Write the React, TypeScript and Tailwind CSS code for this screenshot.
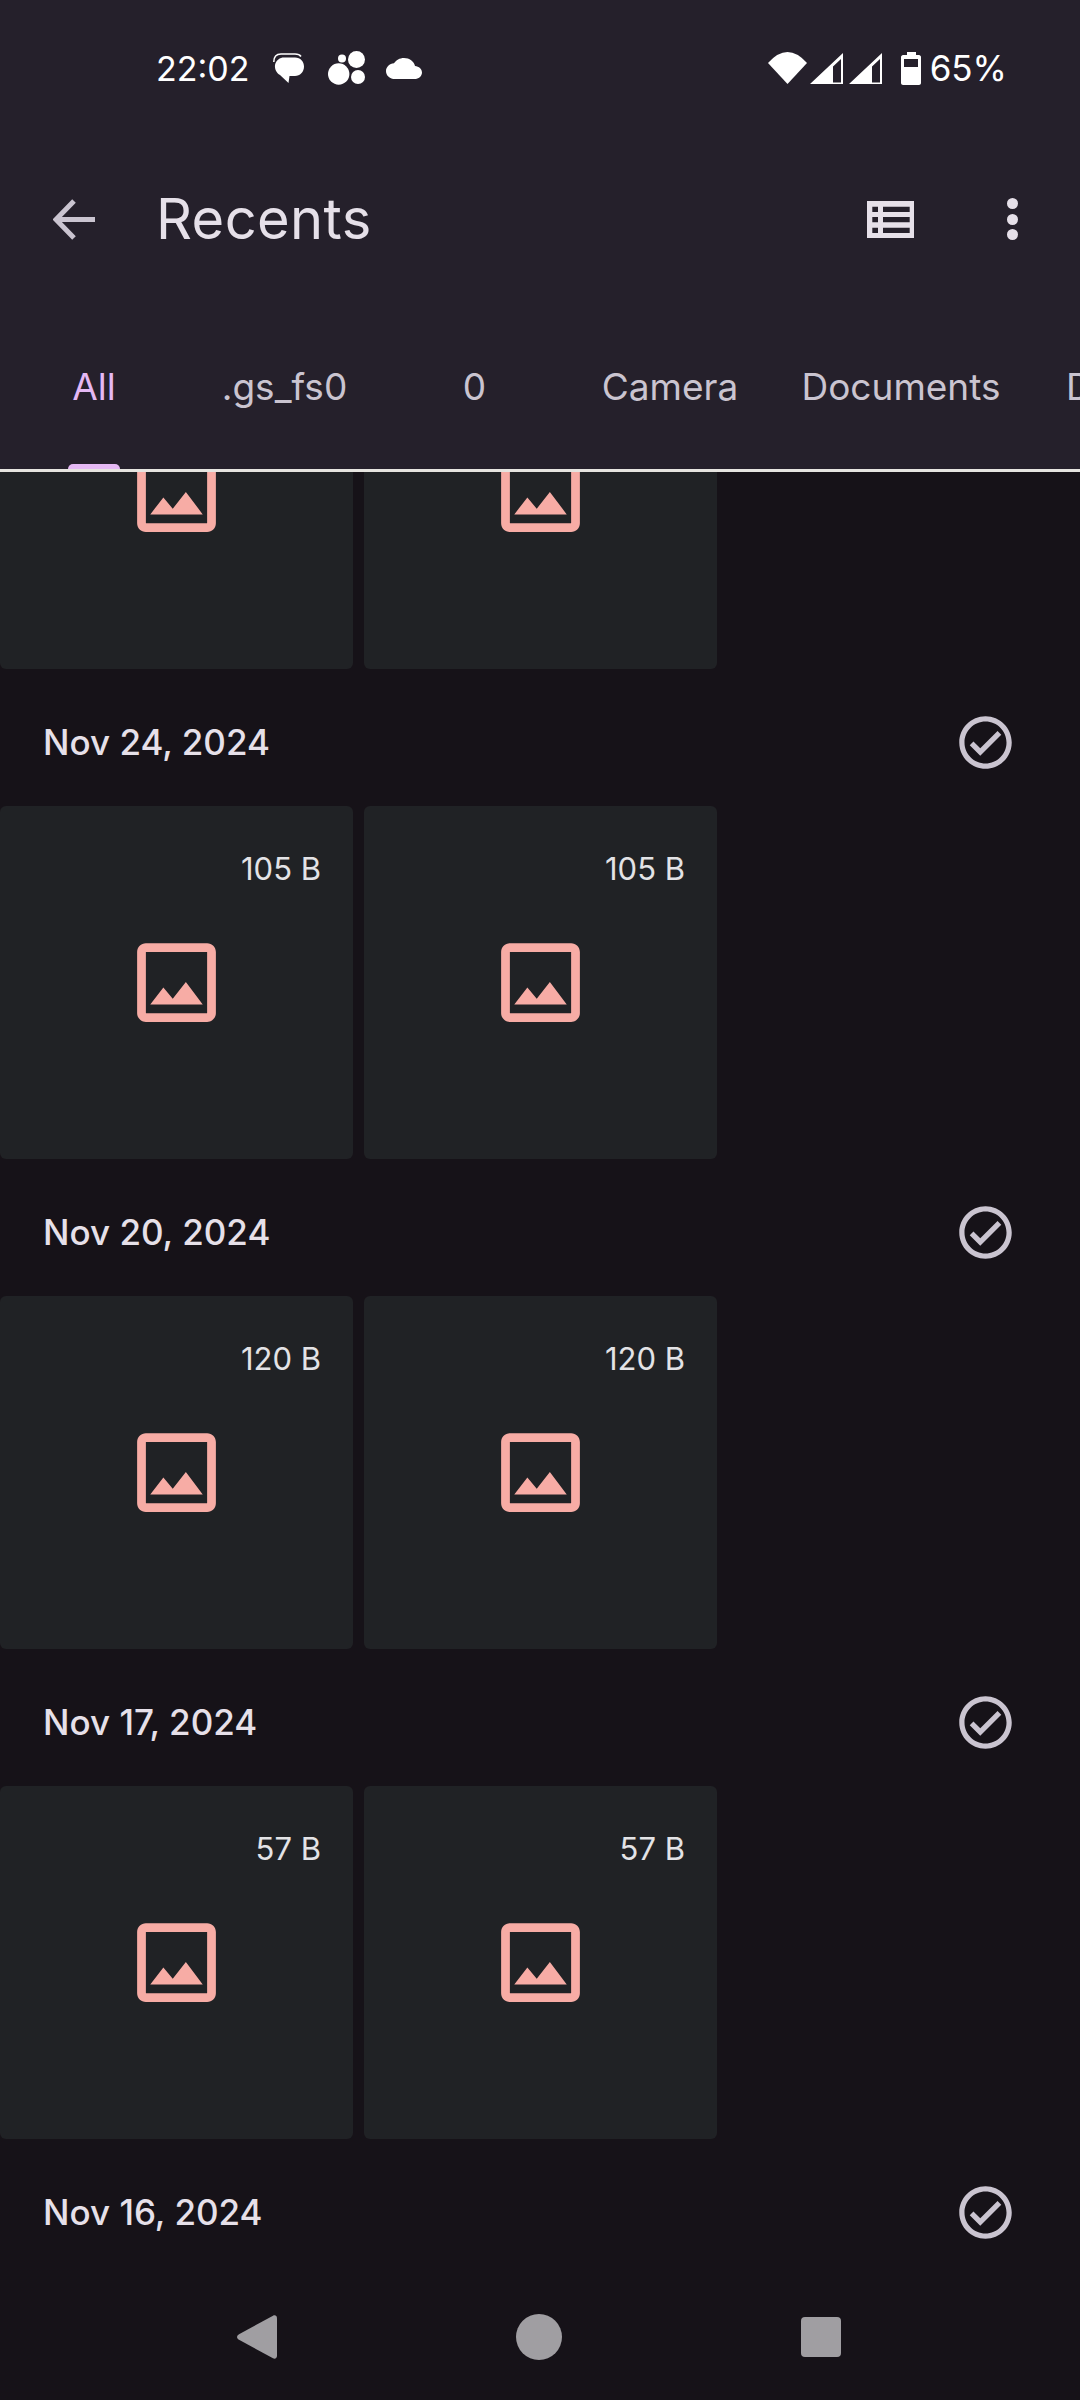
type Group = {
  date: string;
  size: string;
};

const groups: Group[] = [
  { date: "Nov 24, 2024", size: "105 B" },
  { date: "Nov 20, 2024", size: "120 B" },
  { date: "Nov 17, 2024", size: "57 B" },
];

const tabs = [
  { label: "All", width: "w-[188px]", active: true },
  { label: ".gs_fs0", width: "w-[193px]" },
  { label: "0", width: "w-[187px]" },
  { label: "Camera", width: "w-[204px]" },
  { label: "Documents", width: "w-[258px]" },
];

const ImageIcon = () => (
  <svg width="105" height="105" viewBox="0 0 24 24" fill="#f7aca5">
    <path d="M19 5v14H5V5h14m0-2H5c-1.1 0-2 .9-2 2v14c0 1.1.9 2 2 2h14c1.1 0 2-.9 2-2V5c0-1.1-.9-2-2-2zm-4.86 8.86l-3 3.87L9 13.14 6 17h12l-3.86-5.14z" />
  </svg>
);

const Tile = ({ size }: { size: string }) => (
  <div className="relative h-[353px] rounded-[6px] bg-[#202225] flex items-center justify-center">
    <span className="absolute top-[44px] right-[32px] text-[31px] leading-[38px] text-[#e3e3e6]">{size}</span>
    <ImageIcon />
  </div>
);

const DateRow = ({ date }: { date: string }) => (
  <div className="h-[137px] pt-[9px] pl-[43px] pr-[63px] flex items-center justify-between">
    <span className="text-[35px] font-medium text-[#e6e0e9]">{date}</span>
    <svg width="63" height="63" viewBox="0 0 24 24" fill="#cac4d0">
      <path d="M12 2C6.48 2 2 6.48 2 12s4.48 10 10 10 10-4.48 10-10S17.52 2 12 2zm0 18c-4.41 0-8-3.59-8-8s3.59-8 8-8 8 3.59 8 8-3.59 8-8 8zm4.59-12.42L10 14.17l-2.59-2.58L6 13l4 4 8-8z" />
    </svg>
  </div>
);

const TileRow = ({ size }: { size: string }) => (
  <div className="grid grid-cols-[353px_353px] gap-x-[11px]">
    <Tile size={size} />
    <Tile size={size} />
  </div>
);

const StatusBar = () => (
  <div className="h-[136px] pl-[156px] pr-[73px] flex items-center justify-between text-white">
    <div className="flex items-center">
      <span className="text-[34px] w-[117px]">22:02</span>
      <svg width="31" height="30" viewBox="0 0 31 30" fill="white">
        <path d="M0.8 9C0.8 4 3 1 8 1H22C25 1 27 2 28 3.5" fill="none" stroke="white" strokeWidth="1.5" />
        <path d="M11 4.5H22C27.5 4.5 31 8.5 31 13.5C31 19 27 23 22 23H16.5L15.5 30L7 22C3.5 20 1.5 16 2 12C3 7 7 4.5 11 4.5Z" />
      </svg>
      <svg className="ml-[24px]" width="37" height="34" viewBox="0 0 37 34" fill="white">
        <circle cx="10.7" cy="23" r="10.7" />
        <circle cx="14" cy="7.5" r="4" />
        <circle cx="28.5" cy="8.5" r="8.5" />
        <circle cx="30" cy="26" r="7" />
      </svg>
      <svg className="ml-[21px]" width="36" height="21" viewBox="0 4 24 16" preserveAspectRatio="none" fill="white">
        <path d="M19.35 10.04C18.67 6.59 15.64 4 12 4 9.11 4 6.6 5.64 5.35 8.04 2.34 8.36 0 10.91 0 14c0 3.31 2.69 6 6 6h13c2.76 0 5-2.24 5-5 0-2.64-2.05-4.78-4.65-4.96z" />
      </svg>
    </div>
    <div className="flex items-center">
      <svg width="39" height="32" viewBox="0 0 39 32" fill="white">
        <path d="M0 11Q19.5 -11 39 11L19.5 32Z" />
      </svg>
      <svg className="ml-[3px]" width="33" height="31" viewBox="0 0 33 31" fill="white">
        <path fillRule="evenodd" d="M33 0V31H0ZM23 29.5H31V6L23 13.5Z" />
      </svg>
      <svg className="ml-[6px]" width="33" height="31" viewBox="0 0 33 31" fill="white">
        <path fillRule="evenodd" d="M33 0V31H0ZM23 29.5H31V6L23 13.5Z" />
      </svg>
      <svg className="ml-[19px]" width="20" height="33" viewBox="0 0 20 33" fill="white">
        <path fillRule="evenodd" d="M6 0H15V3H18C19 3 20 4 20 5V31C20 32 19 33 18 33H2C1 33 0 32 0 31V5C0 4 1 3 2 3H6ZM3 7V15H17V7Z" />
      </svg>
      <span className="ml-[9px] text-[35px] leading-none">65%</span>
    </div>
  </div>
);

const Toolbar = () => (
  <div className="h-[166px] pl-[53px] pr-[62px] flex items-center">
    <svg width="42" height="41" viewBox="0 0 42 41" fill="none" stroke="#cac4d0" strokeWidth="5">
      <path d="M42 20.5H5" />
      <path d="M21 2L3 20.5L21 39" />
    </svg>
    <span className="ml-[61px] text-[56px] tracking-[0.4px] text-[#e6e0e9]">Recents</span>
    <svg className="ml-auto" width="47" height="37" viewBox="0 0 47 37" fill="#e6e0e9">
      <path
        fillRule="evenodd"
        d="M0 0H47V37H0ZM5.3 5.7V11H11V5.7ZM16 5.7V11H42.7V5.7ZM5.3 16V21.3H11V16ZM16 16V21.3H42.7V16ZM5.3 26.7V32H11V26.7ZM16 26.7V32H42.7V26.7Z"
      />
    </svg>
    <div className="ml-[93px] flex flex-col gap-[4.5px]">
      <div className="w-[11px] h-[11px] rounded-full bg-[#e6e0e9]" />
      <div className="w-[11px] h-[11px] rounded-full bg-[#e6e0e9]" />
      <div className="w-[11px] h-[11px] rounded-full bg-[#e6e0e9]" />
    </div>
  </div>
);

const Tabs = () => (
  <div className="h-[167px] flex overflow-hidden text-[37px]">
    {tabs.map((tab) => (
      <div key={tab.label} className={`${tab.width} shrink-0 flex flex-col items-center`}>
        <div className={`flex-1 flex items-center ${tab.active ? "pt-[8px] text-[#e5b8f4]" : "pt-[3px] text-[#cac4d0]"}`}>
          {tab.label}
        </div>
        {tab.active && <div className="w-[52px] h-[5px] rounded-t-[5px] bg-[#e5b8f4]" />}
      </div>
    ))}
    <div className="shrink-0 pl-[36px] pt-[3px] flex items-center text-[#cac4d0]">Downloads</div>
  </div>
);

const App = () => {
  return (
    <div
      className="w-[1080px] h-[2400px] flex flex-col overflow-hidden bg-[#161218]"
      style={{ fontFamily: "Inter, 'Noto Sans', sans-serif" }}
    >
      <header className="shrink-0 bg-[#25202b] border-b-[3px] border-[#e6e4e0]">
        <StatusBar />
        <Toolbar />
        <Tabs />
      </header>
      <main className="flex-1 overflow-hidden">
        <div className="-mt-[156px]">
          <TileRow size="105 B" />
          {groups.map((group) => (
            <div key={group.date}>
              <DateRow date={group.date} />
              <TileRow size={group.size} />
            </div>
          ))}
          <DateRow date="Nov 16, 2024" />
        </div>
      </main>
      <nav className="shrink-0 h-[126px] pl-[237px] flex items-center gap-[239px] bg-[#161218]">
        <svg width="40" height="44" viewBox="0 0 40 44" fill="#a09ea2">
          <path d="M36 0.7C38.2 -0.4 40 1 40 3.2V40.8C40 43 38.2 44.4 36 43.3L2 24.8C-0.6 23.2 -0.6 20.8 2 19.2Z" />
        </svg>
        <div className="w-[46px] h-[46px] rounded-full bg-[#a09ea2]" />
        <div className="w-[40px] h-[40px] rounded-[4px] bg-[#a09ea2]" />
      </nav>
    </div>
  );
};

export default App;
